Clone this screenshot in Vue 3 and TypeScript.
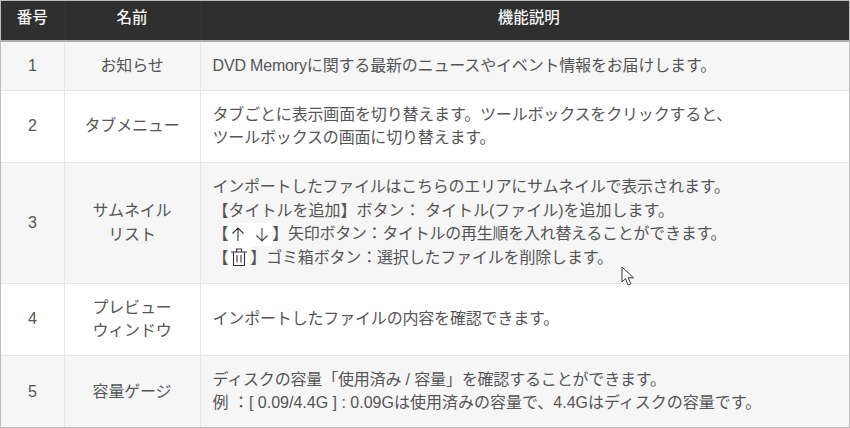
<script setup lang="ts">
interface Row { no: number; name: string[]; kind: string; lines: string[] }
const rows: Row[] = [
  { no: 1, name: ['お知らせ'], kind: 'h1', lines: ['DVD Memoryに関する最新のニュースやイベント情報をお届けします。'] },
  { no: 2, name: ['タブメニュー'], kind: 'h2', lines: ['タブごとに表示画面を切り替えます。ツールボックスをクリックすると、', 'ツールボックスの画面に切り替えます。'] },
  { no: 3, name: ['サムネイル', 'リスト'], kind: 'h3', lines: [] },
  { no: 4, name: ['プレビュー', 'ウィンドウ'], kind: 'h2', lines: ['インポートしたファイルの内容を確認できます。'] },
  { no: 5, name: ['容量ゲージ'], kind: 'h2', lines: ['ディスクの容量「使用済み / 容量」を確認することができます。', '例 ：[ 0.09/4.4G ] : 0.09Gは使用済みの容量で、4.4Gはディスクの容量です。'] },
]
</script>

<template>
  <div class="page">
    <table class="spec">
      <colgroup>
        <col class="c1" />
        <col class="c2" />
        <col />
      </colgroup>
      <thead>
        <tr>
          <th>番号</th>
          <th>名前</th>
          <th class="wide-head">機能説明</th>
        </tr>
      </thead>
      <tbody>
        <tr v-for="r in rows" :key="r.no" :class="r.kind">
          <td class="center num">{{ r.no }}</td>
          <td class="center">
            <div v-for="n in r.name" :key="n">{{ n }}</div>
          </td>
          <td class="desc">
            <template v-if="r.no !== 3">
              <div v-for="l in r.lines" :key="l" :class="{ wide: l.startsWith('例') }">{{ l }}</div>
            </template>
            <template v-else>
              <div class="tight">インポートしたファイルはこちらのエリアにサムネイルで表示されます。</div>
              <div class="wide">【タイトルを追加】ボタン： タイトル(ファイル)を追加します。</div>
              <div class="tight">【<span class="chip arrows"><svg width="14" height="15" viewBox="0 0 14 15"><path d="M7 14V1M1.500 6.500 7 1l5.500 5.500" fill="none" stroke="#333" stroke-width="1.100" /></svg><svg width="14" height="15" viewBox="0 0 14 15"><path d="M7 1v13M1.500 8.500 7 14l5.500-5.500" fill="none" stroke="#444" stroke-width="1.100" /></svg></span>】矢印ボタン：タイトルの再生順を入れ替えることができます。</div>
              <div>【<span class="chip trash"><svg width="18" height="18" viewBox="0 0 18 18"><path d="M1 4h16M6.500 4V1h5v3M3.500 4v13.500h11V4M7 7v7.500M11 7v7.500" fill="none" stroke="#333" stroke-width="1.100" /></svg></span>】ゴミ箱ボタン：選択したファイルを削除します。</div>
            </template>
          </td>
        </tr>
      </tbody>
    </table>
    <svg class="cursor" width="15" height="21" viewBox="0 0 15 21">
      <path d="M1 1v15l3.500-3.300 2.600 6.300 2.800-1.200-2.700-6H12.500Z" fill="#fff" stroke="#333" stroke-width="1" />
    </svg>
  </div>
</template>

<style scoped>
.page {
  position: relative;
  width: 850px;
  height: 428px;
  box-sizing: border-box;
  border: 1px solid #bdbdbd;
  overflow: hidden;
  background: #fff;
  color: #555;
}
.spec {
  width: 848px;
  height: 426px;
  border-collapse: collapse;
  table-layout: fixed;
  font-family: "Liberation Sans", "Noto Sans CJK JP", sans-serif;
  font-size: 16px;
  line-height: 23.5px;
  letter-spacing: -0.17px;
}
.wide { letter-spacing: 0; }
.tight { letter-spacing: -0.27px; }
.c1 { width: 63px; }
.c2 { width: 136px; }
th {
  height: 40px;
  padding: 0 0 5px;
  box-sizing: border-box;
  background: #2f2f2f;
  color: #f4f4f4;
  font-weight: 500;
  font-size: 15.500px;
  letter-spacing: 0;
  border-left: 1px solid #333;
  border-bottom: 2px solid #a9adb8;
}
th:first-child { border-left: 0; }
.wide-head { padding-left: 8px; }
td {
  padding: 0;
  border-left: 1px solid #e3e4ea;
  border-bottom: 1px solid #e3e4ea;
  box-sizing: border-box;
}
td:first-child { border-left: 0; }
tbody tr:nth-child(odd) td { background: #f6f6f7; }
tbody tr:nth-child(even) td { background: #fff; }
tbody tr:last-child td { border-bottom: 0; }
.h1 { height: 49px; }
.h2 { height: 72px; }
.h3 { height: 121px; }
.center { text-align: center; }
.desc { padding-left: 12px; }
.chip {
  display: inline-flex;
  align-items: center;
  justify-content: center;
  vertical-align: top;
  background: #fff;
  height: 23px;
}
.arrows { gap: 10px; width: 44px; margin-top: 1px; }
.trash { width: 22px; margin-top: -1px; }
.cursor {
  position: absolute;
  left: 620px;
  top: 265px;
}
</style>
